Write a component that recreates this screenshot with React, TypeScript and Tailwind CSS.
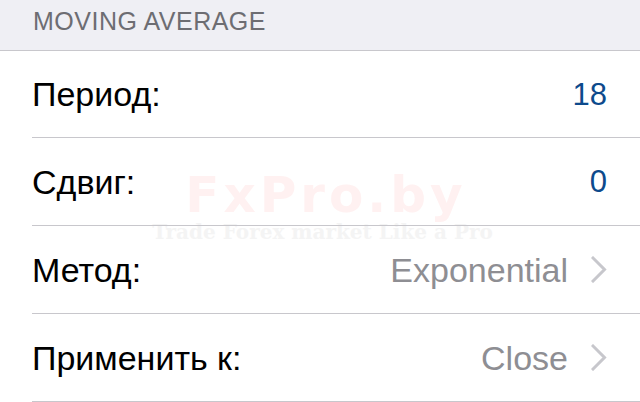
import React from "react";

type Row = {
  label: string;
  value: string;
  kind: "number" | "choice";
};

const rows: Row[] = [
  { label: "Период:", value: "18", kind: "number" },
  { label: "Сдвиг:", value: "0", kind: "number" },
  { label: "Метод:", value: "Exponential", kind: "choice" },
  { label: "Применить к:", value: "Close", kind: "choice" },
];

function Chevron() {
  return (
    <svg width="16" height="27" viewBox="0 0 16 27" className="ml-[23px] shrink-0">
      <polyline
        points="2,2 13.5,13.5 2,25"
        fill="none"
        stroke="#c7c7cc"
        strokeWidth="3"
        strokeLinecap="square"
        strokeLinejoin="miter"
      />
    </svg>
  );
}

function SettingRow({ row, first }: { row: Row; first: boolean }) {
  return (
    <div className={`flex pl-[32px] ${first ? "h-[87px]" : "h-[88px]"}`}>
      <div className="flex flex-1 items-center border-b border-[#c8c7cc] pr-[33px]">
        <span className="text-[34px] leading-none text-black">{row.label}</span>
        <span className="flex-1" />
        {row.kind === "number" ? (
          <span className="text-[31px] leading-none text-[#0d4a8c]">{row.value}</span>
        ) : (
          <>
            <span className="text-[34px] leading-none text-[#8e8e93]">{row.value}</span>
            <Chevron />
          </>
        )}
      </div>
    </div>
  );
}

export default function App() {
  return (
    <div className="relative h-[402px] w-[640px] overflow-hidden bg-white font-['Liberation_Sans','Helvetica',sans-serif]">
      {/* faint brand watermark sitting behind the list */}
      <div className="pointer-events-none absolute left-0 right-0 top-[170px] z-0 flex flex-col items-center">
        <div className="ml-[12px] text-[50px] font-bold leading-none tracking-[4px] text-[#fff1f1] font-['DejaVu_Sans',sans-serif]">
          FxPro.by
        </div>
        <div className="ml-[5px] mt-[2px] text-[20px] font-bold leading-none text-[#f4f4f4] font-['DejaVu_Serif',serif]">
          Trade Forex market Like a Pro
        </div>
      </div>

      <div className="relative z-10">
        <div className="h-[51px] border-b border-[#c8c7cc] bg-[#efeff4] pl-[33px] pt-[9px]">
          <span className="text-[25px] leading-none tracking-[0.5px] text-[#6d6d72]">MOVING AVERAGE</span>
        </div>
        {rows.map((row, i) => (
          <SettingRow key={row.label} row={row} first={i === 0} />
        ))}
      </div>
    </div>
  );
}
